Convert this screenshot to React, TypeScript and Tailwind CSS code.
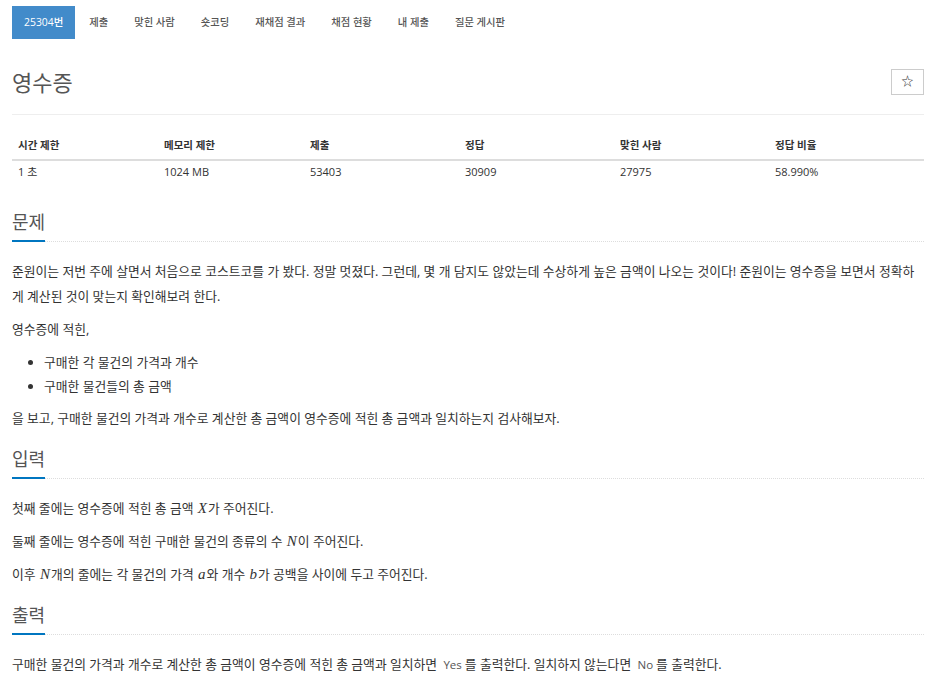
import React from "react";

const F = { fontFamily: '"Open Sans", "Noto Sans CJK KR", sans-serif' } as React.CSSProperties;

function M({ children }: { children: React.ReactNode }) {
  return <span className="italic font-['Liberation_Serif',serif] text-[15px] font-normal px-[1px]">{children}</span>;
}

function Code({ children }: { children: React.ReactNode }) {
  return <span className="text-[11.5px] text-[#555] px-[3px]">{children}</span>;
}

function Section({ title, first, children }: { title: string; first?: boolean; children: React.ReactNode }) {
  return (
    <section className={first ? "mt-[26px]" : "mt-[16px]"}>
      <div className="border-b border-dotted border-[#ddd] relative">
        <h2 className="inline-block text-[18px] leading-[24px] text-[#555] border-b-2 border-[#0076c0] pb-[6px] mb-[-1px]">{title}</h2>
      </div>
      <div className="pt-[17px] text-[12.8px] leading-[25px] text-[#333]">{children}</div>
    </section>
  );
}

export default function App() {
  const tabs = ["제출", "맞힌 사람", "숏코딩", "재채점 결과", "채점 현황", "내 제출", "질문 게시판"];
  const heads = ["시간 제한", "메모리 제한", "제출", "정답", "맞힌 사람", "정답 비율"];
  const vals = ["1 초", "1024 MB", "53403", "30909", "27975", "58.990%"];
  return (
    <div style={F} className="bg-white w-[936px] min-h-[691px] px-[12px] pt-[6px] text-[#333]">
      <nav className="flex items-center">
        <div className="bg-[#428bca] text-white text-[10.4px] font-medium px-[12px] h-[33px] flex items-center">25304번</div>
        {tabs.map((t) => (
          <div key={t} className="ml-[2px] text-[#555] text-[10.3px] font-medium px-[12px] h-[33px] flex items-center">{t}</div>
        ))}
      </nav>
      <div className="mt-[25px] flex items-center justify-between pb-[14px] border-b border-[#eee]">
        <h1 className="text-[22px] leading-[36px] text-[#555]">영수증</h1>
        <button className="w-[33px] h-[26px] border border-[#ccc] flex items-center justify-center text-[12px] text-[#333]">☆</button>
      </div>
      <div className="mt-[17px] grid grid-cols-[146px_146px_155px_155px_155px_1fr] text-[11px]">
        {heads.map((h) => (
          <div key={h} className="px-[6px] h-[29px] flex items-center text-[10.5px] font-bold border-b-2 border-[#ddd]">{h}</div>
        ))}
        {vals.map((v) => (
          <div key={v} className="px-[6px] h-[23px] flex items-center">{v}</div>
        ))}
      </div>
      <Section title="문제" first>
        <p className="mb-[8px]">준원이는 저번 주에 살면서 처음으로 코스트코를 가 봤다. 정말 멋졌다. 그런데, 몇 개 담지도 않았는데 수상하게 높은 금액이 나오는 것이다! 준원이는 영수증을 보면서 정확하게 계산된 것이 맞는지 확인해보려 한다.</p>
        <p className="mb-[8px]">영수증에 적힌,</p>
        <ul className="list-disc pl-[32px] mb-[8px] leading-[24px]">
          <li>구매한 각 물건의 가격과 개수</li>
          <li>구매한 물건들의 총 금액</li>
        </ul>
        <p>을 보고, 구매한 물건의 가격과 개수로 계산한 총 금액이 영수증에 적힌 총 금액과 일치하는지 검사해보자.</p>
      </Section>
      <Section title="입력">
        <p className="mb-[8px]">첫째 줄에는 영수증에 적힌 총 금액 <M>X</M>가 주어진다.</p>
        <p className="mb-[8px]">둘째 줄에는 영수증에 적힌 구매한 물건의 종류의 수 <M>N</M>이 주어진다.</p>
        <p>이후 <M>N</M>개의 줄에는 각 물건의 가격 <M>a</M>와 개수 <M>b</M>가 공백을 사이에 두고 주어진다.</p>
      </Section>
      <Section title="출력">
        <p>구매한 물건의 가격과 개수로 계산한 총 금액이 영수증에 적힌 총 금액과 일치하면 <Code>Yes</Code>를 출력한다. 일치하지 않는다면 <Code>No</Code>를 출력한다.</p>
      </Section>
    </div>
  );
}
